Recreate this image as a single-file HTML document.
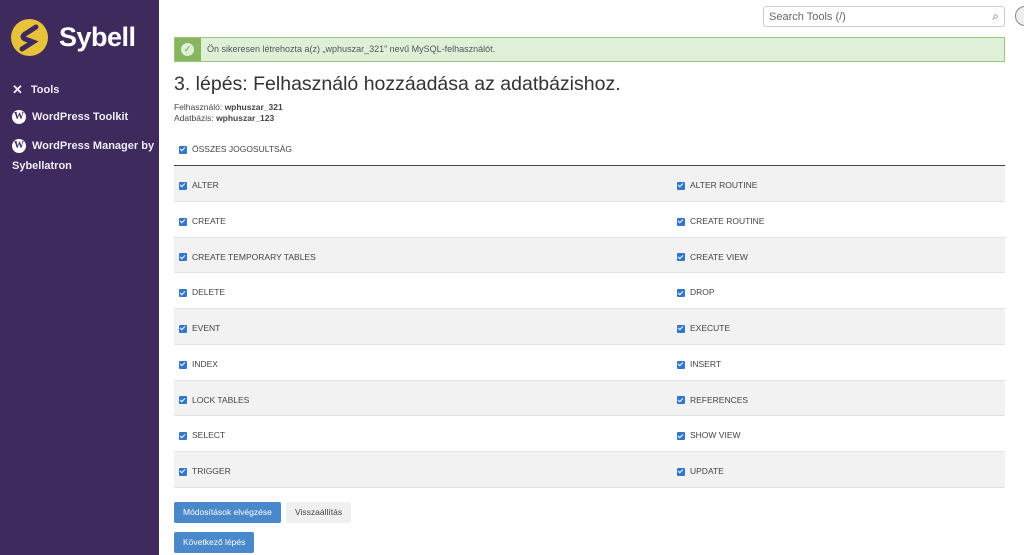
<!DOCTYPE html><html><head><meta charset="utf-8"><style>
*{margin:0;padding:0;box-sizing:border-box}
body{width:1024px;height:555px;overflow:hidden;font-family:"Liberation Sans",sans-serif;background:#fff;position:relative}
.sb{position:absolute;left:0;top:0;width:159px;height:555px;background:#3e2a5c;color:#fff}
.logo{position:absolute;left:11px;top:19px;display:flex;align-items:center}
.logo span{font-size:27px;font-weight:bold;margin-left:11px;letter-spacing:-0.5px}
.nav{position:absolute;left:12px;font-size:11px;font-weight:bold;color:#f0ecf5;display:flex;align-items:center}
.wp{width:14px;height:14px;border-radius:50%;background:#fff;color:#3e2a5c;font-size:10px;font-family:"Liberation Serif",serif;font-weight:bold;text-align:center;line-height:14px;margin-right:6px}
.top{position:absolute;left:159px;top:0;right:0;height:34px;background:#fff}
.search{position:absolute;left:763px;top:6px;width:242px;height:21px;border:1px solid #ccc;border-radius:3px;font-size:11px;color:#666;padding:4px 5px}
.av{position:absolute;left:1015px;top:6px;width:20px;height:20px;border-radius:50%;border:1px solid #888;background:#eee}
.alert{position:absolute;left:174px;top:37px;width:831px;height:25px;background:#dff0d8;border:1px solid #9bc47c}
.alert .ic{position:absolute;left:0;top:0;width:26px;height:23px;background:#88b55f}
.alert .ic i{position:absolute;left:6px;top:5px;width:13px;height:13px;border-radius:50%;background:#dff0d8;color:#88b55f;font-size:9px;font-style:normal;text-align:center;line-height:13px;font-weight:bold}
.alert p{position:absolute;left:32px;top:6px;font-size:9px;color:#555}
h1{position:absolute;left:174px;top:73px;font-size:19.5px;font-weight:normal;color:#333}
.meta{position:absolute;left:174px;top:102px;font-size:8.5px;color:#444;line-height:11px}
.cb{display:inline-block;width:8px;height:8px;background:#3377cc;border-radius:1px;vertical-align:middle;margin-right:5px;position:relative}
.cb:after{content:"";position:absolute;left:2px;top:0.5px;width:2px;height:4px;border:solid #fff;border-width:0 1.3px 1.3px 0;transform:rotate(45deg)}
.lbl{font-size:8.5px;color:#444;position:absolute}
.rows{position:absolute;left:174px;top:165px;width:831px;border-top:1.5px solid #444}
.row{height:35.75px;border-bottom:1px solid #e2e2e2;position:relative}
.row:nth-child(odd){background:#f2f2f2}
.row .a{position:absolute;left:5px;top:14px;font-size:8.5px;color:#444}
.row .b{position:absolute;left:503px;top:14px;font-size:8.5px;color:#444}
.btn{position:absolute;height:21px;font-size:8.5px;line-height:21px;padding:0 9px;border-radius:2px}
</style></head><body>
<div class="sb">
<div class="logo"><svg width="37" height="37" viewBox="0 0 37 37"><circle cx="18.5" cy="18.5" r="18.5" fill="#e8c23a"/><path d="M25 8 L14 15 Q10 18 14 20 L22 23 L11 30" stroke="#3e2a5c" stroke-width="5" fill="none" stroke-linecap="round"/></svg><span>Sybell</span></div>
<div class="nav" style="top:82px"><span style="margin-right:8px;font-size:13px">✕</span>Tools</div>
<div class="nav" style="top:110px"><span class="wp">W</span>WordPress Toolkit</div>
<div class="nav" style="top:139px"><span class="wp">W</span>WordPress Manager by</div>
<div class="nav" style="top:160px">Sybellatron</div>
</div>
<div class="top"></div>
<div class="search">Search Tools (/)<span style="position:absolute;right:5px;top:2px;font-size:12px">⌕</span></div>
<div class="av"></div>
<div class="alert"><div class="ic"><i>✓</i></div><p>Ön sikeresen létrehozta a(z) „wphuszar_321” nevű MySQL-felhasználót.</p></div>
<h1>3. lépés: Felhasználó hozzáadása az adatbázishoz.</h1>
<div class="meta">Felhasználó: <b>wphuszar_321</b><br>Adatbázis: <b>wphuszar_123</b></div>
<div class="lbl" style="left:179px;top:144px"><span class="cb"></span>ÖSSZES JOGOSULTSÁG</div>
<div class="rows">
<div class="row"><span class="a"><span class="cb"></span>ALTER</span><span class="b"><span class="cb"></span>ALTER ROUTINE</span></div>
<div class="row"><span class="a"><span class="cb"></span>CREATE</span><span class="b"><span class="cb"></span>CREATE ROUTINE</span></div>
<div class="row"><span class="a"><span class="cb"></span>CREATE TEMPORARY TABLES</span><span class="b"><span class="cb"></span>CREATE VIEW</span></div>
<div class="row"><span class="a"><span class="cb"></span>DELETE</span><span class="b"><span class="cb"></span>DROP</span></div>
<div class="row"><span class="a"><span class="cb"></span>EVENT</span><span class="b"><span class="cb"></span>EXECUTE</span></div>
<div class="row"><span class="a"><span class="cb"></span>INDEX</span><span class="b"><span class="cb"></span>INSERT</span></div>
<div class="row"><span class="a"><span class="cb"></span>LOCK TABLES</span><span class="b"><span class="cb"></span>REFERENCES</span></div>
<div class="row"><span class="a"><span class="cb"></span>SELECT</span><span class="b"><span class="cb"></span>SHOW VIEW</span></div>
<div class="row"><span class="a"><span class="cb"></span>TRIGGER</span><span class="b"><span class="cb"></span>UPDATE</span></div>
</div>
<div class="btn" style="left:174px;top:502px;background:#4a88cc;color:#fff">Módosítások elvégzése</div>
<div class="btn" style="left:286px;top:502px;background:#f0f0f0;color:#444">Visszaállítás</div>
<div class="btn" style="left:174px;top:532px;background:#4a88cc;color:#fff">Következő lépés</div>
</body></html>
